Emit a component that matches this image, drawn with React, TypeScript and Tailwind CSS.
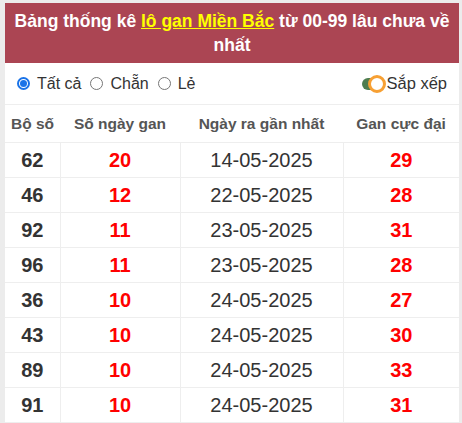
import React, { useState } from "react"

type Row = {
    so: string
    gan: number
    ngay: string
    max: number
}

const rows: Row[] = [
    { so: "62", gan: 20, ngay: "14-05-2025", max: 29 },
    { so: "46", gan: 12, ngay: "22-05-2025", max: 28 },
    { so: "92", gan: 11, ngay: "23-05-2025", max: 31 },
    { so: "96", gan: 11, ngay: "23-05-2025", max: 28 },
    { so: "36", gan: 10, ngay: "24-05-2025", max: 27 },
    { so: "43", gan: 10, ngay: "24-05-2025", max: 30 },
    { so: "89", gan: 10, ngay: "24-05-2025", max: 33 },
    { so: "91", gan: 10, ngay: "24-05-2025", max: 31 },
]

const filters = ["Tất cả", "Chẵn", "Lẻ"]

export default function App() {
    const [filter, setFilter] = useState(0)

    return (
        <div className="min-h-[423px] bg-[#ececec] pt-[3px] pl-[5px] pr-[3px] font-['Liberation_Sans',Arial,sans-serif]">
            <div className="bg-white w-[454px]">
                <div className="bg-[#ab4553] px-[6px] py-[6px] text-center text-white font-bold text-[17.5px] leading-[24px]">
                    Bảng thống kê <a className="text-[#ffff00] underline">lô gan Miền Bắc</a> từ 00-99 lâu chưa về nhất
                </div>

                <div className="h-[42px] flex items-center justify-between pl-3 pr-3 border-b border-[#eeeeee] text-[16px] text-[#333]">
                    <div className="flex items-center gap-[9px]">
                        {filters.map((f, i) => (
                            <label key={f} className="flex items-center gap-[7px]" onClick={() => setFilter(i)}>
                                <span className={`w-[13px] h-[13px] rounded-full flex items-center justify-center ${filter === i ? "border-2 border-[#1a73e8]" : "border border-[#767676]"}`}>
                                    {filter === i && <span className="w-[7px] h-[7px] rounded-full bg-[#1a73e8]" />}
                                </span>
                                <span>{f}</span>
                            </label>
                        ))}
                    </div>
                    <div className="flex items-center">
                        <div className="relative w-[24px] h-[18px] flex items-center">
                            <span className="w-[19px] h-[12px] rounded-full bg-[#4e7d4f]" />
                            <span className="absolute right-0 top-0 w-[18px] h-[18px] rounded-full bg-white border-[3px] border-[#f7a033]" />
                        </div>
                        <span className="text-[16.5px]">Sắp xếp</span>
                    </div>
                </div>

                <table className="w-full border-collapse">
                    <thead>
                        <tr className="h-[37px] text-[15.5px] font-bold text-[#555]">
                            <th className="w-[55px] border-b border-[#eeeeee]">Bộ số</th>
                            <th className="w-[120px] border-b border-[#eeeeee]">Số ngày gan</th>
                            <th className="w-[163px] border-b border-[#eeeeee]">Ngày ra gần nhất</th>
                            <th className="border-b border-[#eeeeee]">Gan cực đại</th>
                        </tr>
                    </thead>
                    <tbody>
                        {rows.map((r) => (
                            <tr key={r.so} className="h-[35px] text-[20px] text-center">
                                <td className="border-b border-r border-[#eeeeee] font-bold text-[#333]">{r.so}</td>
                                <td className="border-b border-r border-[#eeeeee] font-bold text-[#ff0000]">{r.gan}</td>
                                <td className="border-b border-r border-[#eeeeee] text-[#333]">{r.ngay}</td>
                                <td className="border-b border-[#eeeeee] font-bold text-[#ff0000]">{r.max}</td>
                            </tr>
                        ))}
                    </tbody>
                </table>
            </div>
        </div>
    )
}
